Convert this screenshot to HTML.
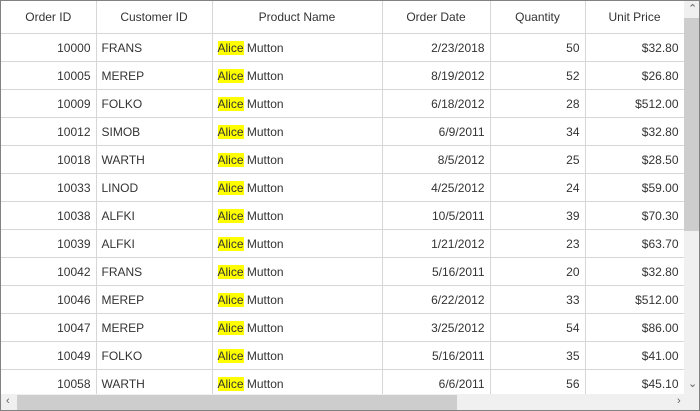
<!DOCTYPE html><html><head><style>
body{margin:0;width:700px;height:411px;overflow:hidden;background:#fff;font-family:"Liberation Sans",sans-serif;font-size:12px;color:#333}
#w{position:absolute;left:0;top:0;width:698px;height:409px;border:1px solid #828282;overflow:hidden}
table{position:absolute;left:0;top:0;border-collapse:collapse;table-layout:fixed}
td,th{border-right:1px solid #d6d6d6;border-bottom:1px solid #d6d6d6;padding:0 5px;white-space:nowrap;overflow:hidden}
th{height:32px;font-weight:normal;text-align:center}
td{height:27px}
.r{text-align:right}
.h{background:#ffff00}
#vs{position:absolute;left:683px;top:0;width:15px;height:393px;background:#f0f0f0}
#vt{position:absolute;left:683px;top:17px;width:15px;height:213px;background:#cdcdcd}
#hs{position:absolute;left:0;top:393px;width:698px;height:16px;background:#f0f0f0}
#ht{position:absolute;left:16px;top:394px;width:440px;height:15px;background:#cdcdcd}
.a{position:absolute;font-size:11px;color:#606060}
</style></head><body><div id="w">
<table>
<colgroup><col style="width:95px"><col style="width:116px"><col style="width:170px"><col style="width:108px"><col style="width:95px"><col style="width:99px"></colgroup>
<tr><th>Order ID</th><th>Customer ID</th><th>Product Name</th><th>Order Date</th><th>Quantity</th><th>Unit Price</th></tr>
<tr><td class="r">10000</td><td>FRANS</td><td><span class="h">Alice</span> Mutton</td><td class="r">2/23/2018</td><td class="r">50</td><td class="r">$32.80</td></tr>
<tr><td class="r">10005</td><td>MEREP</td><td><span class="h">Alice</span> Mutton</td><td class="r">8/19/2012</td><td class="r">52</td><td class="r">$26.80</td></tr>
<tr><td class="r">10009</td><td>FOLKO</td><td><span class="h">Alice</span> Mutton</td><td class="r">6/18/2012</td><td class="r">28</td><td class="r">$512.00</td></tr>
<tr><td class="r">10012</td><td>SIMOB</td><td><span class="h">Alice</span> Mutton</td><td class="r">6/9/2011</td><td class="r">34</td><td class="r">$32.80</td></tr>
<tr><td class="r">10018</td><td>WARTH</td><td><span class="h">Alice</span> Mutton</td><td class="r">8/5/2012</td><td class="r">25</td><td class="r">$28.50</td></tr>
<tr><td class="r">10033</td><td>LINOD</td><td><span class="h">Alice</span> Mutton</td><td class="r">4/25/2012</td><td class="r">24</td><td class="r">$59.00</td></tr>
<tr><td class="r">10038</td><td>ALFKI</td><td><span class="h">Alice</span> Mutton</td><td class="r">10/5/2011</td><td class="r">39</td><td class="r">$70.30</td></tr>
<tr><td class="r">10039</td><td>ALFKI</td><td><span class="h">Alice</span> Mutton</td><td class="r">1/21/2012</td><td class="r">23</td><td class="r">$63.70</td></tr>
<tr><td class="r">10042</td><td>FRANS</td><td><span class="h">Alice</span> Mutton</td><td class="r">5/16/2011</td><td class="r">20</td><td class="r">$32.80</td></tr>
<tr><td class="r">10046</td><td>MEREP</td><td><span class="h">Alice</span> Mutton</td><td class="r">6/22/2012</td><td class="r">33</td><td class="r">$512.00</td></tr>
<tr><td class="r">10047</td><td>MEREP</td><td><span class="h">Alice</span> Mutton</td><td class="r">3/25/2012</td><td class="r">54</td><td class="r">$86.00</td></tr>
<tr><td class="r">10049</td><td>FOLKO</td><td><span class="h">Alice</span> Mutton</td><td class="r">5/16/2011</td><td class="r">35</td><td class="r">$41.00</td></tr>
<tr><td class="r">10058</td><td>WARTH</td><td><span class="h">Alice</span> Mutton</td><td class="r">6/6/2011</td><td class="r">56</td><td class="r">$45.10</td></tr>
</table>
<div id="vs"></div><div id="vt"></div><div id="hs"></div><div id="ht"></div>
<div class="a" style="left:687px;top:1px">&#8963;</div>
<div class="a" style="left:687px;top:376px">&#8964;</div>
<div class="a" style="left:5px;top:394px">&lsaquo;</div>
<div class="a" style="left:676px;top:394px">&rsaquo;</div>
</div></body></html>
